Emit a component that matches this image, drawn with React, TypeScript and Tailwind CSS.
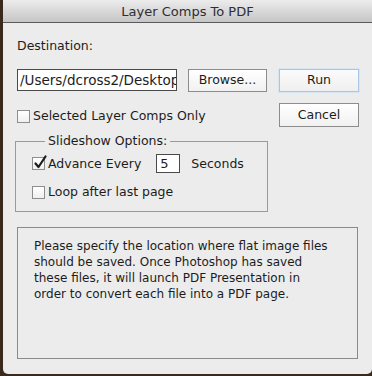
import React from "react";

const font = { fontFamily: '"DejaVu Sans", "Liberation Sans", sans-serif' };

const CheckBox = ({ checked }: { checked?: boolean }) => (
  <span className="relative inline-flex h-[13px] w-[13px] shrink-0 border border-[#8e8e8e] bg-gradient-to-b from-[#ffffff] to-[#f0f0f0]">
    {checked && (
      <svg className="absolute -top-[3px] left-[1px]" width="13" height="14" viewBox="0 0 13 14">
        <path d="M1.5 8.5 L4.5 12 L11.5 1.5" fill="none" stroke="#1a1a1a" strokeWidth="2.2" strokeLinecap="round" strokeLinejoin="round" />
      </svg>
    )}
  </span>
);

export default function App() {
  return (
    <div className="w-[372px] h-[376px] overflow-hidden bg-[#3a2a1e]" style={font}>
      <div className="ml-[3px] h-[374px] rounded-b-[5px] rounded-tl-[4px] bg-[#ececec] flex flex-col text-[#1c1c1c]">
        <div className="h-[23px] shrink-0 border-b border-[#5a5a5a] bg-gradient-to-b from-[#ececec] to-[#c6c6c6] flex items-center justify-center text-[13px] text-[#2e2e2e] pt-[2px]">
          Layer Comps To PDF
        </div>

        <div className="pl-[14px] pr-[13px]">
          <div className="mt-[15px] text-[12.5px] leading-4">Destination:</div>

          <div className="mt-[15px] flex items-start">
            {/* path is cut off in the original dialog too */}
            <div className="w-[160px] h-[22px] overflow-hidden whitespace-nowrap border border-[#4a4a4a] bg-white pl-[2px] text-[13.5px] leading-5">
              /Users/dcross2/Desktop
            </div>
            <button className="ml-[11px] w-[79px] h-[23px] border border-[#8c8c8c] bg-gradient-to-b from-[#ffffff] to-[#f1f1f1] text-[12.5px]">
              Browse...
            </button>
            <button className="ml-[12px] w-[80px] h-[23px] border border-[#a9c6e6] bg-gradient-to-b from-[#fbfbfb] to-[#efefef] text-[12.5px] shadow-[0_0_0_1px_#d8e5f3]">
              Run
            </button>
          </div>

          <div className="mt-[11px] flex items-start justify-between">
            <label className="mt-[5px] flex items-center gap-[3px] text-[12.5px] leading-4">
              <CheckBox />
              Selected Layer Comps Only
            </label>
            <button className="w-[80px] h-[24px] border border-[#8c8c8c] bg-gradient-to-b from-[#ffffff] to-[#f1f1f1] text-[12.5px]">
              Cancel
            </button>
          </div>

          <fieldset className="mt-[6px] -ml-[2px] w-[253px] h-[79px] border border-[#9a9a9a] pl-[16px]">
            <legend className="ml-[13px] px-[3px] text-[12.5px] leading-4">Slideshow Options:</legend>
            <div className="mt-[5px] flex items-center text-[12.5px] leading-4">
              <CheckBox checked />
              <span className="ml-[3px]">Advance Every</span>
              <div className="ml-[15px] w-[24px] h-[19px] border border-[#4a4a4a] bg-white pl-[3px] text-[13px] leading-[17px]">
                5
              </div>
              <span className="ml-[11px]">Seconds</span>
            </div>
            <label className="mt-[11px] flex items-center gap-[3px] text-[12.5px] leading-4">
              <CheckBox />
              Loop after last page
            </label>
          </fieldset>

          <div className="mt-[15px] w-[341px] h-[132px] border border-[#8a8a8a] pl-[16px] pr-[23px] pt-[10px] text-[12px] leading-4">
            Please specify the location where flat image files should be saved. Once Photoshop has saved these files, it will launch PDF Presentation in order to convert each file into a PDF page.
          </div>
        </div>
      </div>
    </div>
  );
}
